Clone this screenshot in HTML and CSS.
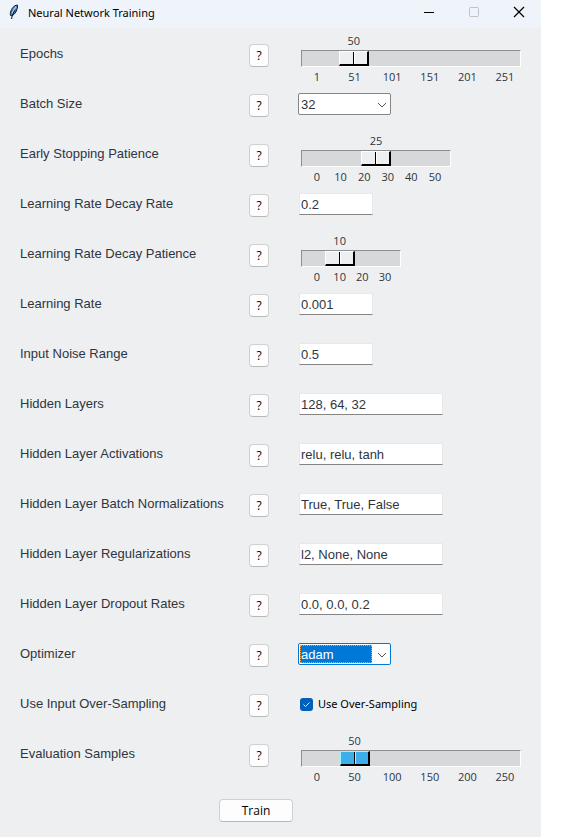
FILE: index.html
```html
<!DOCTYPE html>
<html lang="en">
<head>
<meta charset="utf-8">
<title>Neural Network Training</title>
<link rel="stylesheet" href="styles.css">
</head>
<body>
<div class="window">
  <header class="titlebar">
    <svg class="feather" width="12" height="16" viewBox="0 0 12 16" aria-hidden="true">
      <path d="M9.300 1C6 1.400 3.600 4.400 2.500 8.200C2.100 10 2.200 11.300 3 12C5.500 11.500 7.800 9 8.800 5.800C9.500 3.800 9.800 2.200 9.300 1Z" fill="#3f83d6" stroke="#15191f" stroke-width="1"/>
      <path d="M8.200 2.500C6.200 4.500 4.800 7 4.200 9.500" fill="none" stroke="#a6cdf3" stroke-width="1.200"/>
      <path d="M7 6C5.500 8.500 4.200 11 3.500 15" fill="none" stroke="#15191f" stroke-width="1"/>
    </svg>
    <h1 class="title">Neural Network Training</h1>
    <div class="caption-buttons">
      <button class="caption" type="button" aria-label="Minimize"><svg width="12" height="12" viewBox="0 0 12 12"><path d="M1 6.500H11" stroke="#000"/></svg></button>
      <button class="caption" type="button" aria-label="Maximize" disabled><svg width="12" height="12" viewBox="0 0 12 12"><rect x="1.500" y="1.500" width="9" height="9" rx="1" fill="none" stroke="#c0c2c8"/></svg></button>
      <button class="caption" type="button" aria-label="Close"><svg width="12" height="12" viewBox="0 0 12 12"><path d="M1 1L11 11M11 1L1 11" stroke="#000" stroke-width="1.200"/></svg></button>
    </div>
  </header>

  <form class="form">
    <div class="row">
      <label class="label" for="epochs">Epochs</label>
      <button class="help" type="button" aria-label="Help: Epochs">?</button>
      <div class="scale scale-long">
        <div class="scale-value"><output for="epochs" style="margin-left:19.6%">50</output></div>
        <input class="range" id="epochs" type="range" min="1" max="251" value="50">
        <div class="ticks"><span>1</span><span>51</span><span>101</span><span>151</span><span>201</span><span>251</span></div>
      </div>
    </div>
    <div class="row">
      <label class="label" for="batch">Batch Size</label>
      <button class="help" type="button" aria-label="Help: Batch Size">?</button>
      <div class="combo">
        <select class="select" id="batch"><option>32</option></select>
        <svg class="chevron" width="10" height="6" viewBox="0 0 10 6" aria-hidden="true"><path d="M1 1L5 5L9 1" fill="none" stroke="#555"/></svg>
      </div>
    </div>
    <div class="row">
      <label class="label" for="stopping">Early Stopping Patience</label>
      <button class="help" type="button" aria-label="Help: Early Stopping Patience">?</button>
      <div class="scale scale-medium">
        <div class="scale-value"><output for="stopping" style="margin-left:50%">25</output></div>
        <input class="range" id="stopping" type="range" min="0" max="50" value="25">
        <div class="ticks"><span>0</span><span>10</span><span>20</span><span>30</span><span>40</span><span>50</span></div>
      </div>
    </div>
    <div class="row">
      <label class="label" for="decay">Learning Rate Decay Rate</label>
      <button class="help" type="button" aria-label="Help: Learning Rate Decay Rate">?</button>
      <input class="entry entry-short" id="decay" type="text" value="0.2">
    </div>
    <div class="row">
      <label class="label" for="patience">Learning Rate Decay Patience</label>
      <button class="help" type="button" aria-label="Help: Learning Rate Decay Patience">?</button>
      <div class="scale scale-small">
        <div class="scale-value"><output for="patience" style="margin-left:33.3%">10</output></div>
        <input class="range" id="patience" type="range" min="0" max="30" value="10">
        <div class="ticks"><span>0</span><span>10</span><span>20</span><span>30</span></div>
      </div>
    </div>
    <div class="row">
      <label class="label" for="rate">Learning Rate</label>
      <button class="help" type="button" aria-label="Help: Learning Rate">?</button>
      <input class="entry entry-short" id="rate" type="text" value="0.001">
    </div>
    <div class="row">
      <label class="label" for="noise">Input Noise Range</label>
      <button class="help" type="button" aria-label="Help: Input Noise Range">?</button>
      <input class="entry entry-short" id="noise" type="text" value="0.5">
    </div>
    <div class="row">
      <label class="label" for="layers">Hidden Layers</label>
      <button class="help" type="button" aria-label="Help: Hidden Layers">?</button>
      <input class="entry" id="layers" type="text" value="128, 64, 32">
    </div>
    <div class="row">
      <label class="label" for="activations">Hidden Layer Activations</label>
      <button class="help" type="button" aria-label="Help: Hidden Layer Activations">?</button>
      <input class="entry" id="activations" type="text" value="relu, relu, tanh">
    </div>
    <div class="row">
      <label class="label" for="norms">Hidden Layer Batch Normalizations</label>
      <button class="help" type="button" aria-label="Help: Hidden Layer Batch Normalizations">?</button>
      <input class="entry" id="norms" type="text" value="True, True, False">
    </div>
    <div class="row">
      <label class="label" for="regs">Hidden Layer Regularizations</label>
      <button class="help" type="button" aria-label="Help: Hidden Layer Regularizations">?</button>
      <input class="entry" id="regs" type="text" value="l2, None, None">
    </div>
    <div class="row">
      <label class="label" for="dropout">Hidden Layer Dropout Rates</label>
      <button class="help" type="button" aria-label="Help: Hidden Layer Dropout Rates">?</button>
      <input class="entry" id="dropout" type="text" value="0.0, 0.0, 0.2">
    </div>
    <div class="row">
      <label class="label" for="optimizer">Optimizer</label>
      <button class="help" type="button" aria-label="Help: Optimizer">?</button>
      <div class="combo combo-active">
        <select class="select" id="optimizer"><option>adam</option></select>
        <span class="focus-ring"></span>
        <svg class="chevron" width="10" height="6" viewBox="0 0 10 6" aria-hidden="true"><path d="M1 1L5 5L9 1" fill="none" stroke="#555"/></svg>
      </div>
    </div>
    <div class="row">
      <span class="label">Use Input Over-Sampling</span>
      <button class="help" type="button" aria-label="Help: Use Input Over-Sampling">?</button>
      <label class="check">
        <span class="check-box">
          <input class="check-input" type="checkbox" checked>
          <svg class="check-mark" width="13" height="13" viewBox="0 0 13 13" aria-hidden="true"><path d="M3.500 6.500L5.500 8.500L9.500 4.500" fill="none" stroke="#dcebfa"/></svg>
        </span>
        <span>Use Over-Sampling</span>
      </label>
    </div>
    <div class="row">
      <label class="label" for="samples">Evaluation Samples</label>
      <button class="help" type="button" aria-label="Help: Evaluation Samples">?</button>
      <div class="scale scale-long scale-active">
        <div class="scale-value"><output for="samples" style="margin-left:20%">50</output></div>
        <input class="range" id="samples" type="range" min="0" max="250" value="50">
        <div class="ticks"><span>0</span><span>50</span><span>100</span><span>150</span><span>200</span><span>250</span></div>
      </div>
    </div>
    <div class="actions"><button class="train" type="button">Train</button></div>
  </form>
</div>
</body>
</html>
```
FILE: styles.css
```css
* {
  box-sizing: border-box;
}

body {
  margin: 0;
  background: #fff;
  color: #000;
  font: 12px/16px "Noto Sans", "Open Sans", sans-serif;
}

.window {
  min-height: 100vh;
  margin-right: 28px;
  background: #eeeff1;
}

.titlebar {
  display: flex;
  align-items: center;
  height: 28px;
  padding-left: 8px;
  background: #eff3fa;
}

.feather {
  margin-right: 8px;
  margin-bottom: 4px;
}

.title {
  flex: 1;
  margin: 0 0 2px;
  font-size: 11px;
  font-weight: 400;
}

.caption-buttons {
  display: flex;
  margin-bottom: 4px;
}

.caption {
  display: flex;
  align-items: center;
  justify-content: center;
  width: 45px;
  height: 24px;
  padding: 0;
  border: 0;
  background: none;
}

.row {
  display: grid;
  grid-template-columns: 229px 49px 1fr;
  align-items: start;
  height: 50px;
  padding-left: 20px;
}

.label {
  padding-top: 18px;
  color: #2f3540;
  font: 13px/16px "Liberation Sans", Arial, sans-serif;
}

.help,
.train {
  padding: 0;
  border: 1px solid #d0d0d0;
  border-bottom-color: #b8b8b8;
  border-radius: 4px;
  background: #fdfdfd;
  color: #000;
  font: 12px/16px "Open Sans", "Noto Sans", sans-serif;
}

.help {
  width: 20px;
  height: 23px;
  margin-top: 16px;
}

.entry,
.select {
  color: #2f3540;
  font: 13px/16px "Liberation Sans", Arial, sans-serif;
}

.entry {
  width: 144px;
  height: 22px;
  margin: 15px 0 0 1px;
  padding: 1px 1px 0;
  border: 1px solid #e8e8e8;
  border-bottom-color: #858585;
  border-radius: 0;
  background: #fff;
}

.entry-short {
  width: 74px;
}

.combo {
  position: relative;
  width: 93px;
  margin-top: 15px;
}

.select {
  display: block;
  width: 100%;
  height: 22px;
  padding: 1px 20px 0 2px;
  border: 1px solid #858585;
  border-radius: 2px;
  appearance: none;
  background: #fff;
}

.chevron {
  position: absolute;
  top: 9px;
  right: 4px;
  pointer-events: none;
}

.combo-active .select {
  border-color: #0078d4;
  background: linear-gradient(#0078d7, #0078d7) 1px 1px / 72px 18px no-repeat #fff;
  color: #fff;
}

.focus-ring {
  position: absolute;
  top: 2px;
  left: 2px;
  width: 72px;
  height: 18px;
  border: 1px dotted #ff9a3c;
  pointer-events: none;
}

.scale {
  margin: 5px 0 0 3px;
  color: #2f3540;
  font-family: "Open Sans", "Noto Sans", sans-serif;
  font-size: 11px;
}

.scale-long {
  width: 220px;
}

.scale-medium {
  width: 150px;
}

.scale-small {
  width: 100px;
}

.scale-value,
.ticks {
  display: flex;
  padding: 0 16px;
}

.scale-value {
  height: 17px;
}

.scale-value output,
.ticks span {
  display: flex;
  justify-content: center;
  width: 0;
}

.ticks {
  justify-content: space-between;
  padding-top: 2px;
}

.range {
  display: block;
  width: 100%;
  height: 17px;
  margin: 0;
  border: 1px solid;
  border-color: #8f8f8f #fff #fff #8f8f8f;
  appearance: none;
  background: #d7d8da;
}

.range::-webkit-slider-thumb {
  width: 30px;
  height: 15px;
  border: solid;
  border-width: 1px 2px 2px 1px;
  border-color: #fff #000 #000 #fff;
  border-radius: 0;
  appearance: none;
  background: linear-gradient(90deg, transparent 13px, #000 13px 14px, #fff 14px 15px, transparent 15px) #eeeff1;
}

.scale-active .range::-webkit-slider-thumb {
  border-color: #9ff6ff #000 #000 #9ff6ff;
  background: linear-gradient(90deg, transparent 13px, #000 13px 14px, #9ff6ff 14px 15px, transparent 15px) #3daee9;
}

.check {
  display: flex;
  align-items: center;
  gap: 5px;
  margin: 18px 0 0 2px;
  font-size: 11px;
}

.check-box {
  position: relative;
  display: flex;
}

.check-input {
  width: 13px;
  height: 13px;
  margin: 0;
  border-radius: 3px;
  appearance: none;
  background: #005fb8;
}

.check-mark {
  position: absolute;
  top: 0;
  left: 0;
  pointer-events: none;
}

.actions {
  padding: 21px 0 14px 219px;
}

.train {
  display: block;
  width: 74px;
  height: 23px;
}
```
